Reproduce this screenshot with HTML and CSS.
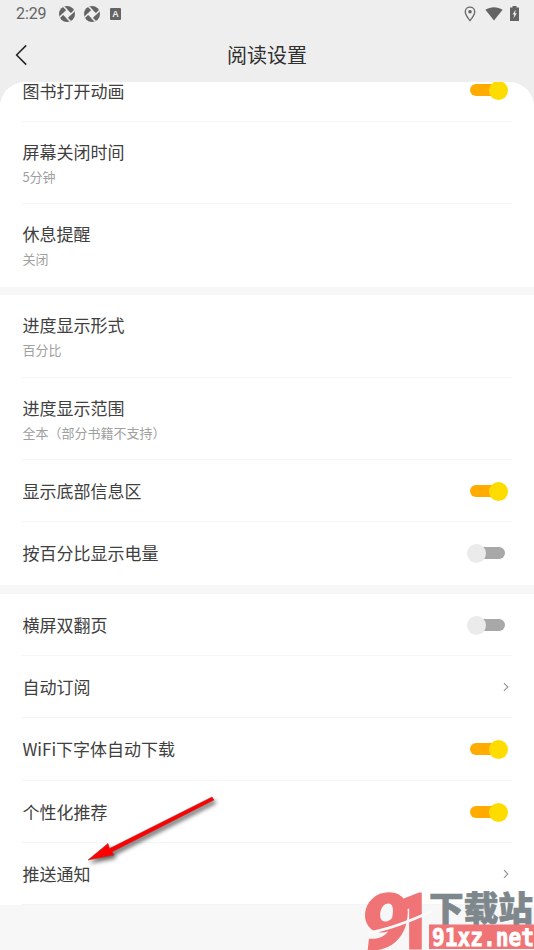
FILE: index.html
```html
<!DOCTYPE html>
<html lang="zh-CN">
<head>
<meta charset="utf-8">
<title>阅读设置</title>
<link rel="stylesheet" href="styles.css">
</head>
<body>
<svg class="defs" width="0" height="0" aria-hidden="true">
  <symbol id="aperture" viewBox="0 0 16 16">
    <circle cx="8" cy="8" r="8" fill="#646464"/>
    <path d="M8 3.200 12.800 8 8 12.800 3.200 8z" fill="#eee"/>
    <path d="M8 4 4.500 .5M12 8 15.500 4.500M8 12 11.500 15.500M4 8 .5 11.500" stroke="#eee" stroke-width="1.500"/>
  </symbol>
  <symbol id="chevron" viewBox="0 0 6 10">
    <path d="M1 1.2 4.8 5 1 8.8" fill="none" stroke="#999" stroke-width="1.2"/>
  </symbol>
</svg>
<header class="status">
  <span class="time">2:29</span>
  <svg class="ap" width="16" height="16"><use href="#aperture"/></svg>
  <svg class="ap" width="16" height="16"><use href="#aperture"/></svg>
  <span class="badge">A</span>
  <span class="system">
    <svg width="12" height="16" viewBox="0 0 12 16"><path d="M6 1.100C3.300 1.100 1.300 3 1.300 5.700 1.300 8.900 6 14.600 6 14.600s4.700-5.700 4.700-8.900C10.700 3 8.700 1.100 6 1.100z" fill="none" stroke="#6c6c6c" stroke-width="1.400"/><circle cx="6" cy="5.800" r="1.800" fill="#646464"/></svg>
    <svg class="wifi" width="18" height="14" viewBox="0 0 18 14"><path d="M.4 2.800C5.500-.7 12.500-.7 17.600 2.800L9 13.600z" fill="#646464"/></svg>
    <svg class="battery" width="9" height="15" viewBox="0 0 9 15"><path d="M2.500 0h4v1.500H9V15H0V1.500h2.500z" fill="#646464"/><path d="M5.800 3.500 2.500 8.600h1.800l-.8 4 3.300-5.400H5z" fill="#eee"/></svg>
  </span>
</header>
<nav class="bar">
  <svg width="14" height="22" viewBox="0 0 14 22"><path d="M12.200 1.400 2.600 11l9.600 9.600" fill="none" stroke="#222" stroke-width="1.500"/></svg>
  <h1>阅读设置</h1>
</nav>
<main class="sheet">
  <section class="group">
    <div class="row clipped"><span>图书打开动画</span><i class="switch on"></i></div>
    <div class="row double"><span>屏幕关闭时间</span><small>5分钟</small></div>
    <div class="row double tall last"><span>休息提醒</span><small>关闭</small></div>
  </section>
  <section class="group second">
    <div class="row double tall"><span>进度显示形式</span><small>百分比</small></div>
    <div class="row double"><span>进度显示范围</span><small>全本（部分书籍不支持）</small></div>
    <div class="row"><span>显示底部信息区</span><i class="switch on"></i></div>
    <div class="row high last"><span>按百分比显示电量</span><i class="switch"></i></div>
  </section>
  <section class="group third">
    <div class="row"><span>横屏双翻页</span><i class="switch"></i></div>
    <div class="row"><span>自动订阅</span><svg class="chev" width="6" height="10"><use href="#chevron"/></svg></div>
    <div class="row high"><span>WiFi下字体自动下载</span><i class="switch on"></i></div>
    <div class="row"><span>个性化推荐</span><i class="switch on"></i></div>
    <div class="row end"><span>推送通知</span><svg class="chev" width="6" height="10"><use href="#chevron"/></svg></div>
  </section>
</main>
<svg class="arrow" width="150" height="85" viewBox="0 0 150 85">
  <path d="M8 80 28 63.500 29.500 68.500 132 17 134 20 32 72 34 75z" fill="#f00" stroke="#a33" stroke-width=".6" stroke-linejoin="round"/>
</svg>
<svg class="mark" width="174" height="63" viewBox="0 0 174 63">
  <g class="digits">
    <text transform="translate(1 61) scale(1.120 1)" class="nine">9</text>
    <text transform="translate(33 61) scale(.920 1)">1</text>
  </g>
  <path d="M8 46Q36 41 72 24" fill="none" stroke="#fbfbfb" stroke-width="2.500"/>
  <text class="site" x="69" y="33.500" textLength="104" lengthAdjust="spacingAndGlyphs">下载站</text>
  <path d="M69 37.500h105V62H69z" fill="#f07376"/>
  <text class="url" x="72" y="58.500" textLength="102" lengthAdjust="spacingAndGlyphs">91xz.net</text>
</svg>
</body>
</html>
```
FILE: styles.css
```css
* { box-sizing: border-box; }
body {
  margin: 0;
  height: 950px;
  overflow: hidden;
  position: relative;
  background: #eee;
  color: #404040;
  font-family: "Noto Sans CJK SC", sans-serif;
}
.defs { position: absolute; }
.status {
  height: 28px;
  padding: 0 15px 0 16px;
  display: flex;
  align-items: center;
  color: #646464;
}
.time { font: 16px/28px Roboto, sans-serif; width: 43px; letter-spacing: -.1px; }
.ap { margin-right: 9px; }
.badge {
  width: 11px;
  height: 12px;
  margin-left: 1px;
  border-radius: 1px;
  background: #646464;
  color: #eee;
  font: bold 9px/12px "Liberation Sans", sans-serif;
  text-align: center;
}
.system { display: flex; align-items: center; margin-left: auto; height: 26px; }
.system .wifi { margin: 0 7px 0 9px; }
.system .battery { margin-bottom: 2px; }
.bar { height: 54px; display: grid; grid-template-columns: 14px 1fr 14px; align-items: center; padding: 0 14px; }
h1 { margin: 0; font-size: 20px; line-height: 30px; font-weight: 400; text-align: center; color: #303030; }
.sheet { height: 868px; border-radius: 25px 25px 0 0; overflow: hidden; background: #f7f7f7; }
.group { background: #fff; padding-left: 22px; }
.second { margin-top: 8px; }
.third { margin-top: 9px; }
.row {
  height: 62px;
  display: flex;
  align-items: center;
  justify-content: space-between;
  margin-right: 22px;
  border-bottom: 1px solid #f5f5f5;
  font-size: 17px;
  line-height: 26px;
}
.row span { padding-left: .4px; }
.clipped { margin-top: -22px; }
.double { height: 82px; flex-direction: column; align-items: flex-start; justify-content: flex-start; padding-top: 17px; }
.tall { height: 83px; }
.high { height: 63px; }
.last { border-bottom-color: transparent; }
.double small { padding-left: .4px; font-size: 13px; line-height: 20px; margin-top: 2px; color: #a0a0a0; }
.switch { position: relative; width: 38px; height: 19px; margin: 1px 4px 0 0; }
.clipped .switch { margin-top: -1px; }
.switch::before {
  content: "";
  position: absolute;
  left: 4px;
  top: 3px;
  width: 31px;
  height: 12px;
  border-radius: 6px;
  background: #a8a8a8;
}
.switch::after {
  content: "";
  position: absolute;
  left: -3px;
  top: 0;
  width: 19px;
  height: 19px;
  border-radius: 50%;
  background: #ebebeb;
}
.on::before { left: 0; background: #ffab00; }
.on::after { left: 19px; background: #ffdc00; }
.chev { margin-right: 3px; }
.arrow { position: absolute; left: 80px; top: 780px; filter: drop-shadow(2px 3px 2px #0009); }
.mark { position: absolute; left: 360px; top: 887px; }
.digits { font: bold 76px Roboto, sans-serif; fill: #f07376; stroke: #f07376; stroke-width: 3; }
.nine { font-style: italic; }
.site { font: 900 34px "Noto Sans CJK SC", sans-serif; fill: #7d878c; stroke: #7d878c; stroke-width: .7; }
.url { font: bold 24px "DejaVu Sans Mono", monospace; fill: #fff; stroke: #fff; stroke-width: .8; }
```
